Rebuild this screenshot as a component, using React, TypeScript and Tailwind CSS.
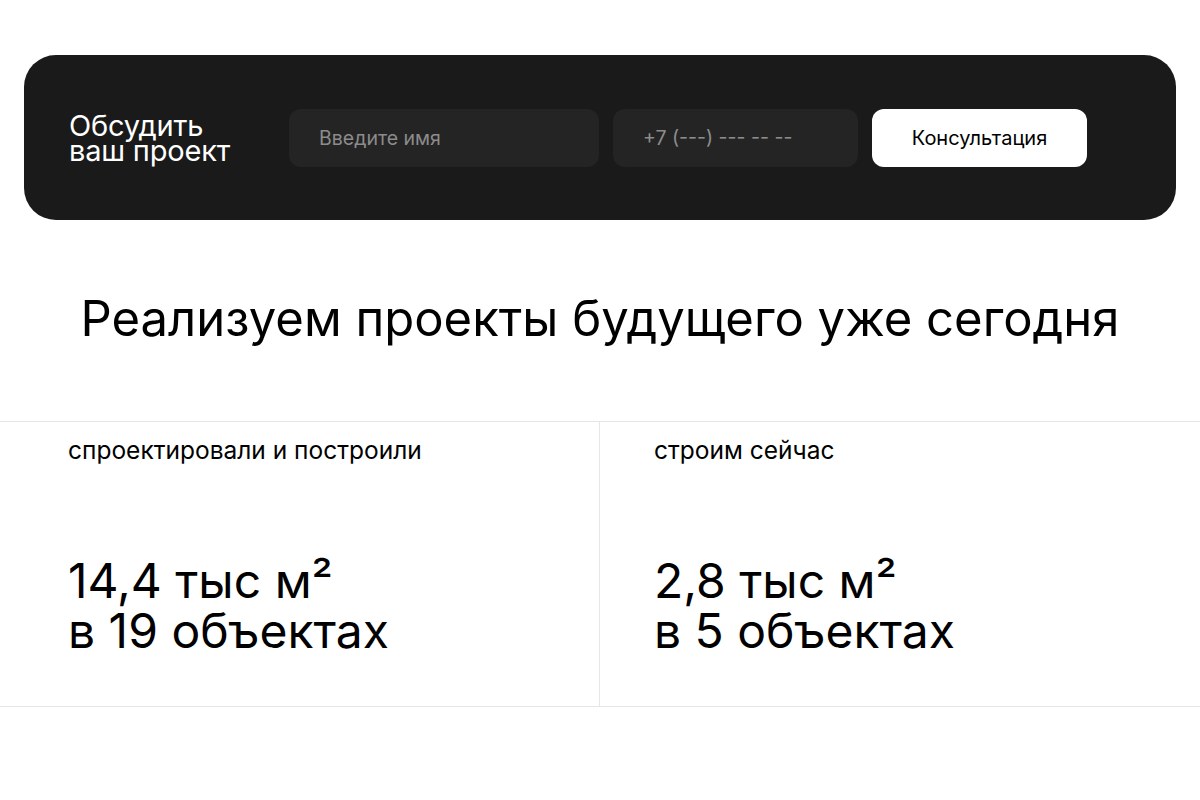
export default function App() {
  return (
    <div className="min-h-[800px] bg-white font-['Inter',sans-serif] text-black">
      <div className="px-6 pt-[55px]">
        <div className="flex h-[165px] items-center rounded-[32px] bg-[#1a1a1a] pl-[45px]">
          <h3 className="w-[220px] text-[29px] leading-[25px] tracking-[-0.2px] text-white">
            Обсудить
            <br />
            ваш проект
          </h3>
          <div className="flex items-center gap-[14px]">
            <input
              placeholder="Введите имя"
              className="h-[58px] w-[310px] rounded-xl bg-[#242424] px-[30px] text-[19.5px] text-white outline-none placeholder:text-[#8c8c8c]"
            />
            <input
              placeholder="+7 (---) --- -- --"
              className="h-[58px] w-[245px] rounded-xl bg-[#242424] px-[30px] text-[19.5px] text-white outline-none placeholder:text-[#8c8c8c]"
            />
            <button className="h-[58px] w-[215px] rounded-xl bg-white text-[20px] text-black">
              Консультация
            </button>
          </div>
        </div>
      </div>

      <h2 className="pt-[69px] pb-[72px] text-center text-[49px] leading-[60px]">
        Реализуем проекты будущего уже сегодня
      </h2>

      <div className="grid grid-cols-2 border-y border-[#e6e6e6]">
        <div className="flex h-[284px] flex-col border-r border-[#e6e6e6] pl-[68px] pt-[14px]">
          <p className="text-[24.5px] leading-[28px]">спроектировали и построили</p>
          <p className="mt-auto mb-[50px] text-[48px] leading-[50px]">
            14,4 тыс м²
            <br />в 19 объектах
          </p>
        </div>
        <div className="flex h-[284px] flex-col pl-[54px] pt-[14px]">
          <p className="text-[24.5px] leading-[28px]">строим сейчас</p>
          <p className="mt-auto mb-[50px] text-[48px] leading-[50px]">
            2,8 тыс м²
            <br />в 5 объектах
          </p>
        </div>
      </div>
    </div>
  );
}
